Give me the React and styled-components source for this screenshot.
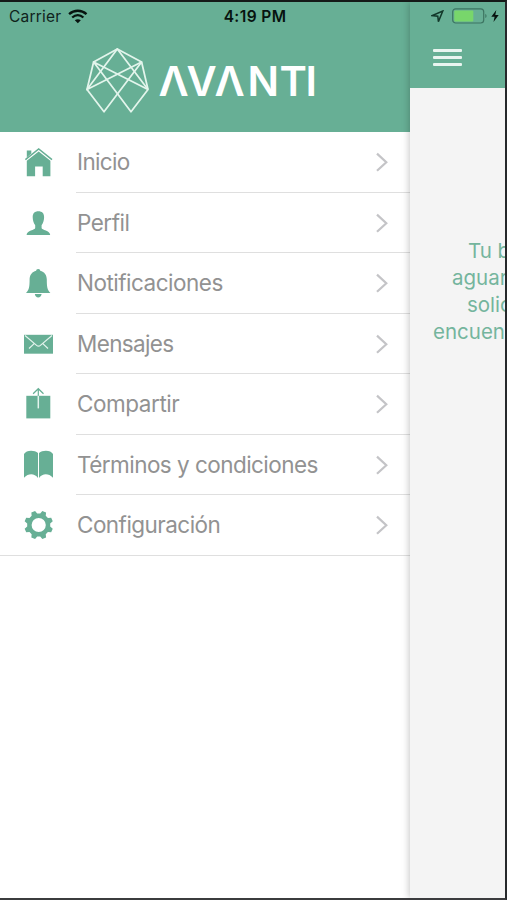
import React from "react";
import styled, { createGlobalStyle } from "styled-components";

const GREEN = "#67af95";

const GlobalStyle = createGlobalStyle`
  * {
    box-sizing: border-box;
  }
  body {
    margin: 0;
    font-family: Inter, "Liberation Sans", sans-serif;
  }
`;

const Screen = styled.div`
  position: relative;
  display: flex;
  width: 507px;
  height: 900px;
  overflow: hidden;
  background-color: #fff;
  border-top: 2px solid #151a18;
  border-right: 2px solid #26292b;
  border-bottom: 2px solid #3b3c3e;
`;

const StatusBar = styled.div`
  position: absolute;
  top: 0;
  left: 0;
  right: 0;
  height: 28px;
  display: flex;
  align-items: center;
  justify-content: space-between;
  padding: 0 6px 0 9px;
  color: #10231c;
  font-size: 15.5px;
  z-index: 2;
`;

const StatusGroup = styled.div`
  display: flex;
  align-items: center;
  flex: 1;
  gap: ${({ gap }) => gap}px;
  justify-content: ${({ end }) => (end ? "flex-end" : "flex-start")};
`;

const Carrier = styled.span`
  letter-spacing: 0.2px;
`;

const Time = styled.span`
  font-weight: 600;
  font-size: 15.5px;
  letter-spacing: 0.4px;
  margin-left: 2px;
  color: #07130f;
`;

const Drawer = styled.aside`
  width: 410px;
  flex-shrink: 0;
  background-color: #fff;
`;

const DrawerHeader = styled.header`
  display: flex;
  align-items: flex-start;
  height: 130px;
  padding: 44px 0 0 84px;
  background-color: ${GREEN};
`;

const Wordmark = styled.svg`
  margin: 6px 0 0 9px;
  overflow: visible;
  font-family: Inter, "Liberation Sans", sans-serif;
  font-size: 41.5px;
  font-weight: 600;
  fill: #fff;
`;

const Menu = styled.nav`
  display: flex;
  flex-direction: column;
  height: 424px;
  border-bottom: 1px solid #dfdfdf;
`;

const MenuItem = styled.a`
  display: flex;
  flex-shrink: 0;
  height: 60.5px;
  padding-left: 22px;
  cursor: pointer;
`;

const IconCell = styled.svg`
  flex-shrink: 0;
  width: 32px;
  height: 32px;
  margin: 14px 22px 0 0;
  color: ${GREEN};
  fill: currentColor;
  overflow: visible;
`;

const ItemBody = styled.div`
  display: flex;
  flex: 1;
  align-items: center;
  justify-content: space-between;
  padding: ${({ last }) => (last ? "0 21px 1px 1px" : "1px 21px 0 1px")};
  border-bottom: ${({ last }) => (last ? "none" : "1px solid #dfdfdf")};
`;

const Label = styled.span`
  color: #929292;
  font-size: 22.5px;
  line-height: 28px;
  letter-spacing: ${({ spacing }) => spacing}px;
  white-space: nowrap;
`;

const Main = styled.main`
  position: relative;
  flex: 1;
  min-width: 0;
  background-color: #f4f4f4;
  box-shadow: -1px 0 7px rgba(0, 0, 0, 0.22);
`;

const MainHeader = styled.div`
  height: 86px;
  padding: 47px 0 0 23px;
  background-color: ${GREEN};
`;

const MenuButton = styled.button`
  display: flex;
  flex-direction: column;
  gap: 4.5px;
  width: 29px;
  padding: 0;
  border: none;
  background: none;
  cursor: pointer;
`;

const Bar = styled.span`
  height: 2.7px;
  border-radius: 1px;
  background-color: #e9f5f0;
`;

const Message = styled.p`
  width: 200px;
  margin: 149px 0 0 23px;
  color: #74b59d;
  font-size: 20.5px;
  line-height: 27px;
`;

const Line = styled.span`
  display: block;
  padding-left: ${({ indent }) => indent}px;
  white-space: nowrap;
`;

// eight teeth, flat on the outside
const gearPoints = Array.from({ length: 8 }, (_, i) => {
  const center = 22.5 + i * 45;
  return [
    [center - 15, 11.6],
    [center - 8, 14.5],
    [center + 8, 14.5],
    [center + 15, 11.6],
  ]
    .map(([angle, r]) => {
      const a = (angle * Math.PI) / 180;
      return `${(16.7 + r * Math.cos(a)).toFixed(2)} ${(16 + r * Math.sin(a)).toFixed(2)}`;
    })
    .join("L");
}).join("L");

const icons = {
  home: (
    <>
      <path d="M4.8 4.5H9.3V7.4L4.8 11.6Z" />
      <path d="M3.4 13.6 16.7 2.9 30 13.6" fill="none" stroke="currentColor" strokeWidth="1.5" />
      <path d="M16.7 5.4 28.4 14.7V30.3H20.7V20.5H13.1V30.3H4.8V14.7Z" />
    </>
  ),
  user: (
    <path d="M16.4 4.3C12.8 4.3 10.6 6.4 10.7 10.2C10.8 13.6 11.5 15.8 13.2 18.2V21C13.2 23.2 4.7 23.4 4.6 27.9H28.2C28.1 23.4 19.6 23.2 19.6 21V18.2C21.3 15.8 22 13.6 22.1 10.2C22.2 6.4 20 4.3 16.4 4.3Z" />
  ),
  bell: (
    <>
      <path d="M16.2 2C14.9 2 14.2 2.8 14.2 3.8C9.9 4.8 7.6 8.2 7.6 12.6C7.6 19.5 7.2 23 4 26H28.4C25.2 23 24.8 19.5 24.8 12.6C24.8 8.2 22.5 4.8 18.2 3.8C18.2 2.8 17.5 2 16.2 2Z" />
      <path d="M12.8 27H19.6C19.2 29.2 18 30.4 16.2 30.4C14.4 30.4 13.2 29.2 12.8 27Z" />
    </>
  ),
  mail: (
    <>
      <path d="M2 6.8H31V25.7H2Z" />
      <path
        d="M3 7.5 14.6 17.4Q16.5 19 18.4 17.4L30 7.5M7 20.5 12.2 15.6M26 20.5 20.8 15.6"
        fill="none"
        stroke="#e3f3ed"
        strokeWidth="1.2"
      />
    </>
  ),
  share: (
    <>
      <path d="M4.3 7.8H28.3V30.4H4.3Z" />
      <path d="M16.3 0.8V8M11.1 5.8 16.3 0.7 21.5 5.8" fill="none" stroke="currentColor" strokeWidth="1.2" />
      <path d="M16.3 7.8V20.4" fill="none" stroke="#e3f3ed" strokeWidth="1.5" />
    </>
  ),
  book: (
    <>
      <path d="M2 5C4 0.8 12.5 0.6 16 4V29C12.5 24.2 6.5 24 2 28.8Z" />
      <path d="M31 5C29 0.8 20.5 0.6 17 4V29C20.5 24.2 26.5 24 31 28.8Z" />
    </>
  ),
  gear: (
    <path fillRule="evenodd" d={`M${gearPoints}ZM9.6 16a7.1 7.1 0 1 0 14.2 0a7.1 7.1 0 1 0 -14.2 0Z`} />
  ),
};

const menuItems = [
  { icon: "home", label: "Inicio", spacing: -0.65 },
  { icon: "user", label: "Perfil", spacing: -0.5 },
  { icon: "bell", label: "Notificaciones", spacing: -0.5 },
  { icon: "mail", label: "Mensajes", spacing: -0.65 },
  { icon: "share", label: "Compartir", spacing: -0.45 },
  { icon: "book", label: "Términos y condiciones", spacing: -0.54 },
  { icon: "gear", label: "Configuración", spacing: -0.54 },
];

const Chevron = () => (
  <svg width="14" height="20" viewBox="0 0 14 20" fill="none" stroke="#c4c4c7" strokeWidth="2.2">
    <path d="M2 1.6 11.3 10.2 2 18.8" />
  </svg>
);

const Wifi = () => (
  <svg width="20" height="15" viewBox="0 0 20 15" fill="none" stroke="#07130f">
    <path d="M1.1 5.2C6.2 0.6 13.4 0.6 18.5 5.2" strokeWidth="2.4" />
    <path d="M4.2 8.5C7.6 5.5 12 5.5 15.4 8.5" strokeWidth="2.3" />
    <path d="M9.8 14.3 6.8 11.3C8.6 9.8 11 9.8 12.8 11.3Z" fill="#07130f" stroke="none" />
  </svg>
);

const Location = () => (
  <svg width="13" height="13" viewBox="0 0 13 13" fill="none" stroke="#12382a" strokeWidth="1.5">
    <path d="M11.8 1 7.4 11.6 6.8 6.2 1.3 5.6Z" />
  </svg>
);

const Battery = () => (
  <svg width="36" height="16" viewBox="0 0 36 16">
    <rect x="0.7" y="0.8" width="31" height="14.2" rx="3" fill="none" stroke="#3d7562" strokeWidth="1.2" />
    <rect x="2.3" y="2.4" width="19" height="11" rx="1" fill="#78d66b" />
    <path d="M33.3 5.7C35 6.5 35 9.3 33.3 10.1Z" fill="#3d7562" />
  </svg>
);

const Bolt = () => (
  <svg width="8" height="12" viewBox="0 0 8 12" fill="#07130f">
    <path d="M5.3 0 0.3 6.8H3.6L2.5 12 7.7 4.9H4.3Z" />
  </svg>
);

const LogoMark = () => (
  <svg width="66" height="68" viewBox="0 0 66 68" fill="none" stroke="#e3f5ec" strokeWidth="1.75" strokeLinejoin="round">
    <path d="M33.3 3 9.6 16 3 43.5 20 65.8 57.6 16 33.3 3Z" />
    <path d="M57.6 16 64 43.5 47 65.8 9.6 16 64 43.5" />
    <path d="M57.6 16 3 43.5 33.3 3 64 43.5" />
  </svg>
);

const App = () => {
  return (
    <>
      <GlobalStyle />
      <Screen>
        <StatusBar>
          <StatusGroup gap={7}>
            <Carrier>Carrier</Carrier>
            <Wifi />
          </StatusGroup>
          <Time>4:19 PM</Time>
          <StatusGroup end gap={3}>
            <StatusGroup end gap={8}>
              <Location />
              <Battery />
            </StatusGroup>
            <Bolt />
          </StatusGroup>
        </StatusBar>

        <Drawer>
          <DrawerHeader>
            <LogoMark />
            <Wordmark width="160" height="56" role="img" aria-label="AVANTI">
              <text x="-0.5 27.5 55.5 88.5 120.5 146.5" y="43.5">ΛVΛNTI</text>
            </Wordmark>
          </DrawerHeader>
          <Menu>
            {menuItems.map((item, index) => (
              <MenuItem key={item.icon}>
                <IconCell viewBox="0 0 32 32">{icons[item.icon]}</IconCell>
                <ItemBody last={index === menuItems.length - 1 ? 1 : 0}>
                  <Label spacing={item.spacing}>{item.label}</Label>
                  <Chevron />
                </ItemBody>
              </MenuItem>
            ))}
          </Menu>
        </Drawer>

        <Main>
          <MainHeader>
            <MenuButton>
              <Bar />
              <Bar />
              <Bar />
            </MenuButton>
          </MainHeader>
          <Message>
            <Line indent={35}>Tu b</Line>
            <Line indent={19}>aguar</Line>
            <Line indent={34}>solic</Line>
            <Line indent={0}>encuen</Line>
          </Message>
        </Main>
      </Screen>
    </>
  );
};

export default App;
